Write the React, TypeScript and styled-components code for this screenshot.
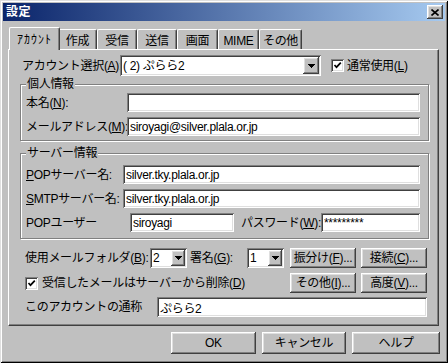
import styled, { createGlobalStyle, css } from "styled-components";

const GlobalStyle = createGlobalStyle`
  html, body {
    margin: 0;
    padding: 0;
    background: #c0c0c0;
  }
  body {
    font-family: "Liberation Sans", "Noto Sans CJK JP", sans-serif;
    font-size: 12px;
    line-height: 14px;
    letter-spacing: -0.3px;
    color: #000;
  }
`;

const raised = css`
  box-shadow: inset -1px -1px #404040, inset 1px 1px #fff,
    inset -2px -2px #808080, inset 2px 2px #dfdfdf;
`;

const sunken = css`
  box-shadow: inset 1px 1px #808080, inset -1px -1px #fff,
    inset 2px 2px #404040, inset -2px -2px #dfdfdf;
`;

const Window = styled.div`
  width: 448px;
  height: 363px;
  box-sizing: border-box;
  padding: 3px;
  background: #c0c0c0;
  box-shadow: inset 1px 1px #dfdfdf, inset -1px -1px #000,
    inset 2px 2px #fff, inset -2px -2px #808080;
  display: flex;
  flex-direction: column;
`;

const TitleBar = styled.div`
  height: 18px;
  flex-shrink: 0;
  display: flex;
  align-items: center;
  justify-content: space-between;
  padding: 0 2px 0 3px;
  background: linear-gradient(to right, #0a246a, #a6caf0);
  color: #fff;
  font-weight: bold;
  letter-spacing: 0.5px;
`;

const CloseButton = styled.div`
  width: 16px;
  height: 14px;
  box-sizing: border-box;
  background: #c0c0c0;
  ${raised};
  display: flex;
  align-items: center;
  justify-content: center;
`;

const Body = styled.div`
  flex: 1;
  display: flex;
  flex-direction: column;
  padding: 6px 5px 0 5px;
`;

const TabStrip = styled.div`
  display: flex;
  align-items: flex-end;
  height: 22px;
  padding-left: 3px;
`;

const Tab = styled.div<{ $active?: boolean; $w: number }>`
  box-sizing: border-box;
  flex-shrink: 0;
  width: ${(p) => p.$w + (p.$active ? 4 : 0)}px;
  height: ${(p) => (p.$active ? 23 : 20)}px;
  margin: 0 ${(p) => (p.$active ? -2 : 0)}px ${(p) => (p.$active ? -1 : 0)}px;
  padding-top: ${(p) => (p.$active ? 5 : 4)}px;
  border-top: 1px solid #fff;
  border-left: 1px solid #fff;
  border-right: 1px solid #404040;
  border-radius: 2px 2px 0 0;
  box-shadow: inset -1px 0 #808080;
  background: #c0c0c0;
  position: relative;
  z-index: ${(p) => (p.$active ? 2 : 1)};
  display: flex;
  justify-content: center;
  white-space: nowrap;
`;

const HalfKana = styled.span`
  letter-spacing: 1px;
`;

const Panel = styled.div`
  box-sizing: border-box;
  width: 431px;
  height: 277px;
  border-top: 1px solid #fff;
  border-left: 1px solid #fff;
  border-right: 1px solid #404040;
  border-bottom: 1px solid #404040;
  box-shadow: inset -1px -1px #808080;
  padding: 5px 9px 0 11px;
  display: flex;
  flex-direction: column;
`;

const Row = styled.div<{ $h?: number; $mt?: number; $pl?: number; $pr?: number }>`
  display: flex;
  align-items: center;
  height: ${(p) => p.$h ?? 19}px;
  margin-top: ${(p) => p.$mt ?? 0}px;
  padding-left: ${(p) => p.$pl ?? 0}px;
  padding-right: ${(p) => p.$pr ?? 0}px;
`;

const Label = styled.span<{ $w?: number; $ml?: number }>`
  flex-shrink: 0;
  white-space: nowrap;
  width: ${(p) => (p.$w ? `${p.$w}px` : "auto")};
  margin-left: ${(p) => p.$ml ?? 0}px;
`;

const TextField = styled.input<{ $w?: number }>`
  box-sizing: border-box;
  flex: ${(p) => (p.$w ? `0 0 ${p.$w}px` : "1 1 auto")};
  min-width: 0;
  height: 100%;
  margin: 0;
  border: none;
  outline: none;
  padding: 0 1px 0 3px;
  background: #fff;
  font: inherit;
  letter-spacing: inherit;
  color: #000;
  ${sunken};
`;

const Combo = styled.div<{ $w: number }>`
  box-sizing: border-box;
  flex: 0 0 ${(p) => p.$w}px;
  height: 100%;
  padding: 2px;
  background: #fff;
  display: flex;
  ${sunken};
`;

const ComboText = styled.span`
  flex: 1;
  display: flex;
  align-items: center;
  padding-left: 1px;
  white-space: nowrap;
  overflow: hidden;
`;

const DropButton = styled.span<{ $w: number }>`
  flex: 0 0 ${(p) => p.$w}px;
  background: #c0c0c0;
  ${raised};
  display: flex;
  align-items: center;
  justify-content: center;
`;

const CheckBox = styled.span<{ $ml?: number }>`
  box-sizing: border-box;
  flex: 0 0 13px;
  height: 13px;
  margin-left: ${(p) => p.$ml ?? 0}px;
  background: #fff;
  ${sunken};
  display: flex;
  align-items: center;
  justify-content: center;
`;

const Group = styled.div<{ $mt: number; $pt: number; $pb: number }>`
  position: relative;
  margin-top: ${(p) => p.$mt}px;
  padding: ${(p) => p.$pt}px 8px ${(p) => p.$pb}px 5px;
  border: 1px solid #808080;
  box-shadow: inset 1px 1px #fff, 1px 1px #fff;
  display: flex;
  flex-direction: column;
  gap: 5px;
`;

const Caption = styled.span`
  position: absolute;
  top: -8px;
  left: 5px;
  padding: 0 1px;
  background: #c0c0c0;
  white-space: nowrap;
`;

const OptionsGrid = styled.div`
  display: grid;
  grid-template-columns: 1fr 66px 66px;
  grid-auto-rows: 20px;
  column-gap: 5px;
  row-gap: 5px;
  margin-top: 9px;
  padding: 0 2px 0 5px;
`;

const Cell = styled.div`
  display: flex;
  align-items: center;
  min-width: 0;
`;

const Button = styled.div<{ $w?: number }>`
  box-sizing: border-box;
  width: ${(p) => (p.$w ? `${p.$w}px` : "auto")};
  height: 100%;
  background: #c0c0c0;
  ${raised};
  display: flex;
  align-items: center;
  justify-content: center;
  white-space: nowrap;
`;

const Footer = styled.div`
  display: flex;
  gap: 6px;
  height: 22px;
  margin-top: 6px;
  padding-left: 163px;
`;

const Arrow = () => (
  <svg width="7" height="4" viewBox="0 0 7 4" shapeRendering="crispEdges">
    <polygon points="0,0 7,0 3.5,4" fill="#000" />
  </svg>
);

const Check = () => (
  <svg width="9" height="9" viewBox="0 0 9 9">
    <polyline
      points="1.5,4 3.5,6.2 7.8,1.6"
      fill="none"
      stroke="#000"
      strokeWidth="1.7"
    />
  </svg>
);

const CloseX = () => (
  <svg width="8" height="7" viewBox="0 0 8 7">
    <path d="M0.5 0.5 L7.5 6.5 M7.5 0.5 L0.5 6.5" stroke="#000" strokeWidth="1.6" />
  </svg>
);

const tabs = [
  { key: "account", w: 47 },
  { key: "作成", w: 39 },
  { key: "受信", w: 40 },
  { key: "送信", w: 40 },
  { key: "画面", w: 41 },
  { key: "MIME", w: 41 },
  { key: "その他", w: 43 },
];

export default function App() {
  return (
    <>
      <GlobalStyle />
      <Window>
        <TitleBar>
          <span>設定</span>
          <CloseButton>
            <CloseX />
          </CloseButton>
        </TitleBar>
        <Body>
          <TabStrip>
            {tabs.map((t, i) => (
              <Tab key={t.key} $w={t.w} $active={i === 0}>
                {i === 0 ? <HalfKana>ｱｶｳﾝﾄ</HalfKana> : t.key}
              </Tab>
            ))}
          </TabStrip>
          <Panel>
            <Row $h={21} $pl={2}>
              <Label $w={98}>
                アカウント選択(<u>A</u>):
              </Label>
              <Combo $w={201}>
                <ComboText>( 2) ぷらら2</ComboText>
                <DropButton $w={16}>
                  <Arrow />
                </DropButton>
              </Combo>
              <CheckBox $ml={10}>
                <Check />
              </CheckBox>
              <Label $ml={3}>
                通常使用(<u>L</u>)
              </Label>
            </Row>

            <Group $mt={8} $pt={8} $pb={4}>
              <Caption>個人情報</Caption>
              <Row>
                <Label $w={101}>
                  本名(<u>N</u>):
                </Label>
                <TextField readOnly defaultValue="" />
              </Row>
              <Row>
                <Label $w={101}>
                  メールアドレス(<u>M</u>):
                </Label>
                <TextField readOnly defaultValue="siroyagi@silver.plala.or.jp" />
              </Row>
            </Group>

            <Group $mt={12} $pt={11} $pb={6}>
              <Caption>サーバー情報</Caption>
              <Row>
                <Label $w={97}>
                  <u>P</u>OPサーバー名:
                </Label>
                <TextField readOnly defaultValue="silver.tky.plala.or.jp" />
              </Row>
              <Row>
                <Label $w={97}>
                  <u>S</u>MTPサーバー名:
                </Label>
                <TextField readOnly defaultValue="silver.tky.plala.or.jp" />
              </Row>
              <Row>
                <Label $w={104}>POPユーザー</Label>
                <TextField $w={104} readOnly defaultValue="siroyagi" />
                <Label $w={80} $ml={7}>
                  パスワード(<u>W</u>):
                </Label>
                <TextField readOnly defaultValue="*********" />
              </Row>
            </Group>

            <OptionsGrid>
              <Cell>
                <Label $w={125}>
                  使用メールフォルダ(<u>B</u>):
                </Label>
                <Combo $w={37}>
                  <ComboText>2</ComboText>
                  <DropButton $w={14}>
                    <Arrow />
                  </DropButton>
                </Combo>
                <Label $w={57} $ml={3}>
                  署名(<u>G</u>):
                </Label>
                <Combo $w={37}>
                  <ComboText>1</ComboText>
                  <DropButton $w={14}>
                    <Arrow />
                  </DropButton>
                </Combo>
              </Cell>
              <Button>
                振分け(<u>F</u>)...
              </Button>
              <Button>
                接続(<u>C</u>)...
              </Button>
              <Cell>
                <CheckBox>
                  <Check />
                </CheckBox>
                <Label $ml={4}>
                  受信したメールはサーバーから削除(<u>D</u>)
                </Label>
              </Cell>
              <Button>
                その他(<u>I</u>)...
              </Button>
              <Button>
                高度(<u>V</u>)...
              </Button>
            </OptionsGrid>

            <Row $h={20} $mt={4} $pl={5} $pr={2}>
              <Label $w={132}>このアカウントの通称</Label>
              <TextField readOnly defaultValue="ぷらら2" />
            </Row>
          </Panel>
          <Footer>
            <Button $w={85}>OK</Button>
            <Button $w={85}>キャンセル</Button>
            <Button $w={88}>ヘルプ</Button>
          </Footer>
        </Body>
      </Window>
    </>
  );
}
